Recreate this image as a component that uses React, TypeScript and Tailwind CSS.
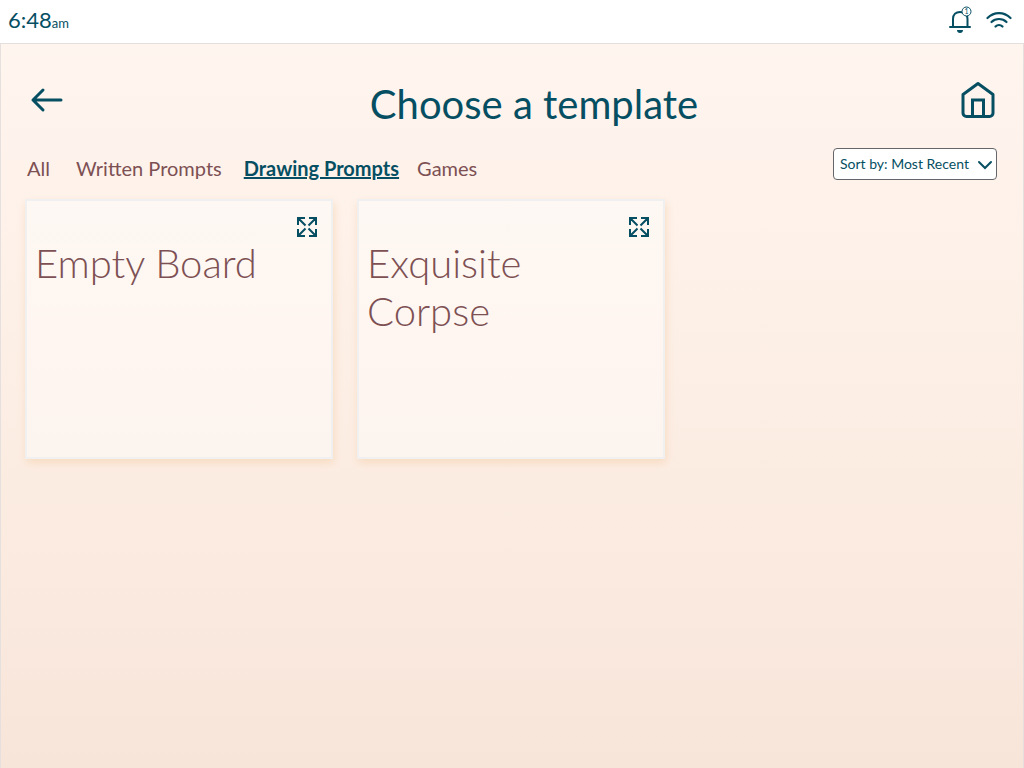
import React from 'react';

const tabs = [
  { label: 'All', style: 'mr-6.5' },
  { label: 'Written Prompts', style: 'mr-5.5' },
  { label: 'Drawing Prompts', style: 'mr-4.5 font-bold text-[#064f63] underline' },
  { label: 'Games', style: '' },
];

const templates = ['Empty Board', 'Exquisite Corpse'];

const StatusBar: React.FC = () => (
  <header className="flex h-[43px] items-center justify-between bg-white pl-2 pr-3">
    <p className="text-[22px] leading-6">
      6:48<span className="text-[13px]">am</span>
    </p>
    <div className="flex items-center gap-3 pb-[3px]">
      <svg width="26" height="28" viewBox="0 0 26 28" fill="none" role="img" aria-label="1 notification">
        <path d="M5 21V13C5 8.500 8 6 12 6s7.500 2.500 7.500 7v8" stroke="#064f63" strokeWidth="2" />
        <path d="M2 21h20" stroke="#064f63" strokeWidth="2" strokeLinecap="round" />
        <path d="M9 24h6c0 2-1.200 3-3 3s-3-1-3-3Z" fill="#064f63" />
        <circle cx="18.500" cy="5.500" r="4.500" fill="white" stroke="#064f63" />
        <text x="18.500" y="8" fontSize="7" textAnchor="middle" fill="#064f63">1</text>
      </svg>
      <svg width="26" height="18" viewBox="0 0 26 18" fill="none" stroke="#064f63" strokeWidth="2.200" strokeLinecap="round" aria-hidden="true">
        <path d="M1.500 7C8 .5 18 .5 24.500 7" />
        <path d="M5.500 11c4-4 11-4 15 0" />
        <path d="M9.500 15.500c2-2 5-2 7 0" />
      </svg>
    </div>
  </header>
);

const ExpandIcon: React.FC = () => (
  <svg width="20" height="20" viewBox="0 0 20 20" fill="none" stroke="#064f63" strokeWidth="2" aria-hidden="true">
    <path d="M1 8V1h7M1 1l7.500 7.500M12 1h7v7M19 1l-7.500 7.500M1 12v7h7M1 19l7.500-7.500M19 12v7h-7M19 19l-7.500-7.500" />
  </svg>
);

const TemplateCard: React.FC<{ title: string }> = ({ title }) => (
  <article className="flex h-[260px] flex-col border-2 border-[#f0f0f0] bg-linear-to-b from-[#fdf8f3] via-[#fff6f1] to-[#fcf4ef] px-2 pt-3 shadow-[1px_4px_8px_#f8dcc2]">
    <button type="button" aria-label={`Expand ${title}`} className="mr-0.5 self-end px-1 pb-0.5 pt-1">
      <ExpandIcon />
    </button>
    <h2 className="pr-6 text-[40px] font-light leading-12 text-[#7d5053]">{title}</h2>
  </article>
);

const App: React.FC = () => {
  return (
    <div className="flex min-h-screen flex-col font-['Lato',sans-serif] text-[#064f63]">
      <StatusBar />
      <main className="flex-1 border-x border-t border-[#e5e0de] bg-linear-to-b from-[#fff5ef] via-[#fceee4] to-[#f8e5da] pl-6 pr-[26px]">
        <div className="flex items-start justify-between pt-9">
          <button type="button" aria-label="Back" className="px-1 py-1">
            <svg width="36" height="32" viewBox="0 0 36 32" fill="none" stroke="#064f63" strokeWidth="3" strokeLinecap="round" strokeLinejoin="round" aria-hidden="true">
              <path d="M32 16H4M14 6L4 16l10 10" />
            </svg>
          </button>
          <h1 className="ml-10 text-[40px] leading-12">Choose a template</h1>
          <a href="#home" aria-label="Home">
            <svg width="38" height="40" viewBox="0 0 38 40" fill="none" stroke="#064f63" strokeWidth="3" strokeLinejoin="round" aria-hidden="true">
              <path d="M4 14.500L19 3.500l15 11V33a3.500 3.500 0 0 1-3.500 3.500h-23A3.500 3.500 0 0 1 4 33Z" />
              <path d="M13.500 36V20h11v16" strokeLinejoin="miter" />
            </svg>
          </a>
        </div>

        <div className="mt-5 flex items-start justify-between">
          <nav className="flex pl-0.5 pt-1 text-xl leading-8 text-[#7d5053]">
            {tabs.map((tab) => (
              <button key={tab.label} type="button" className={tab.style}>
                {tab.label}
              </button>
            ))}
          </nav>
          <div className="relative">
            <select
              aria-label="Sort by"
              className="h-8 w-[164px] appearance-none rounded-sm border border-[#64666a] bg-white pl-1.5 pr-6 text-sm"
            >
              <option>Sort by: Most Recent</option>
              <option>Sort by: Name</option>
            </select>
            <svg className="pointer-events-none absolute right-1 top-3" width="16" height="10" viewBox="0 0 16 10" fill="none" stroke="#064f63" strokeWidth="2" strokeLinecap="round" aria-hidden="true">
              <path d="M2 2l6 6 6-6" />
            </svg>
          </div>
        </div>

        <section className="mt-[15px] grid grid-cols-3 gap-6">
          {templates.map((title) => (
            <TemplateCard key={title} title={title} />
          ))}
        </section>
      </main>
    </div>
  );
};

export default App;
